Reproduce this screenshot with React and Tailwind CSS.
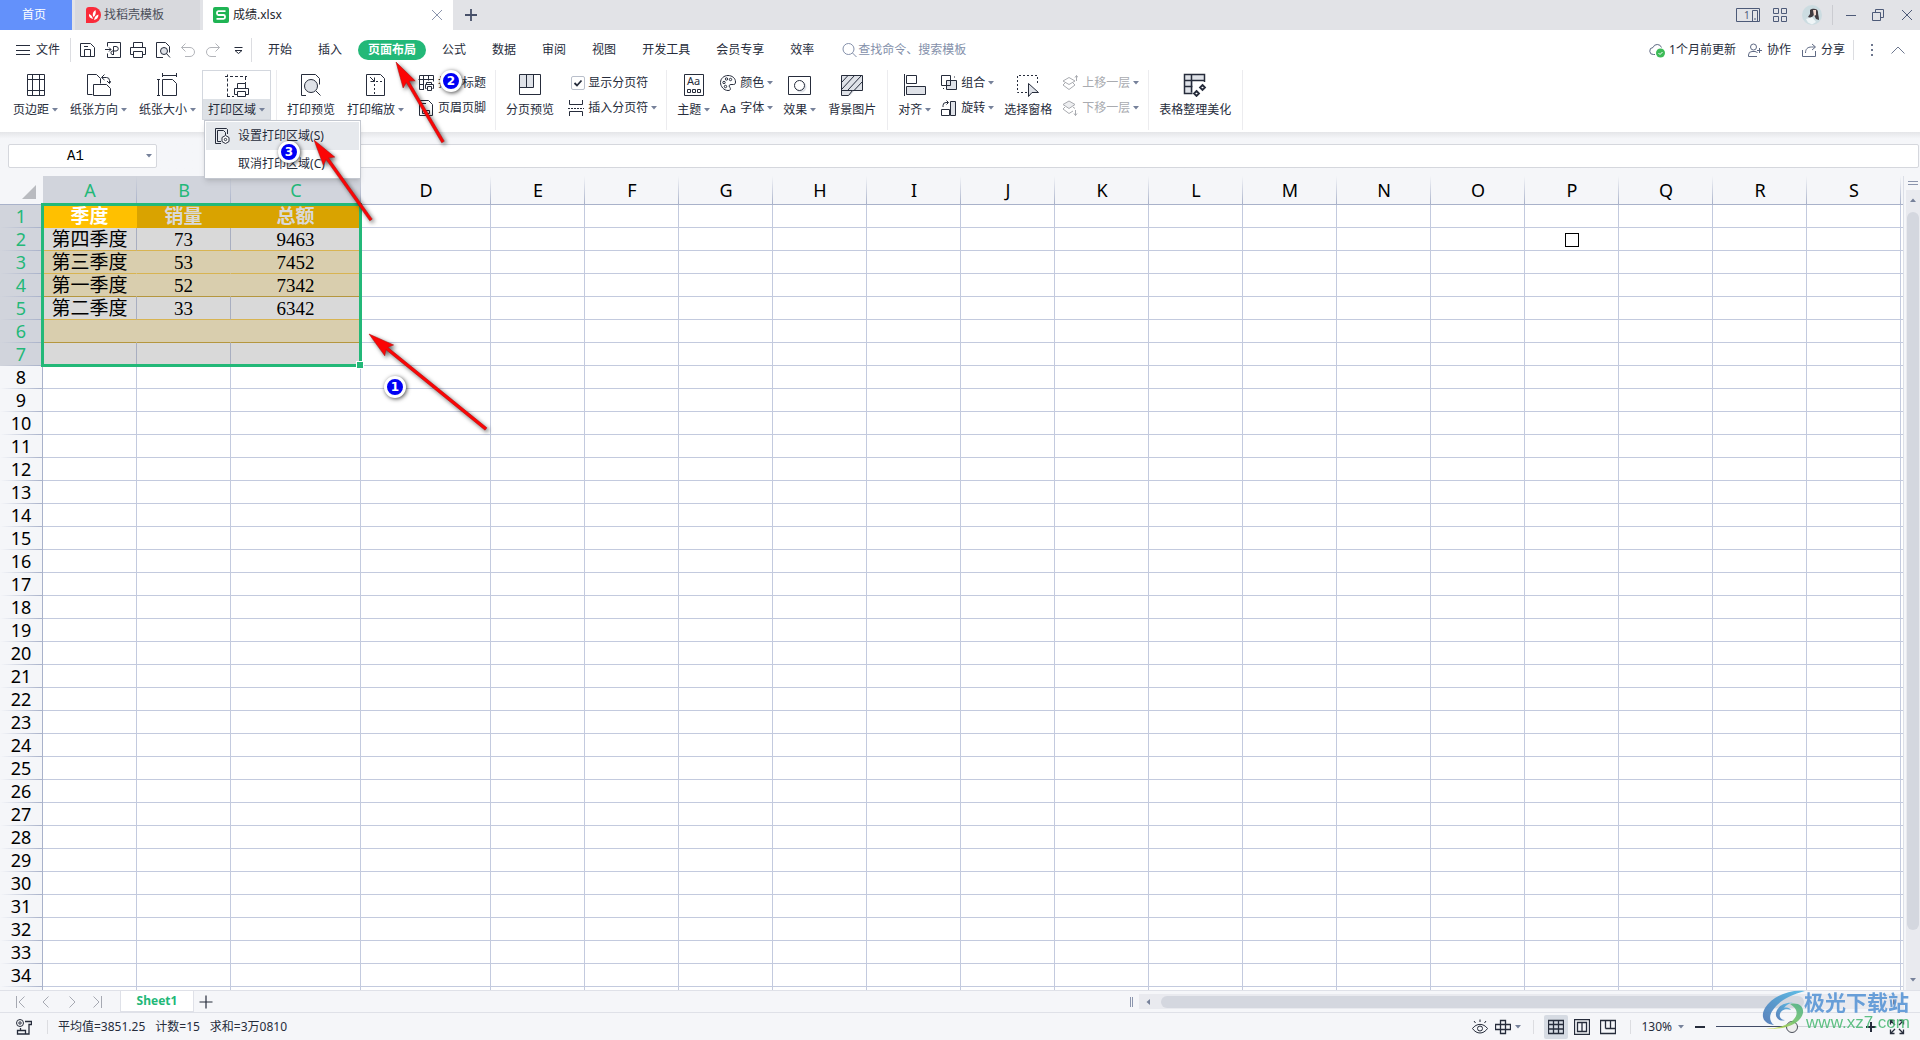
import { useState } from "react";

const COLUMNS = [
  { name: "A", width: 94 },
  { name: "B", width: 94 },
  { name: "C", width: 130 },
  { name: "D", width: 130 },
  ..."EFGHIJKLMNOPQRS".split("").map((name) => ({ name, width: 94 })),
];

const ROW_COUNT = 34;
const SELECTED_ROWS = 7;
const SELECTED_COLS = 3;

const DATA = [
  ["季度", "销量", "总额"],
  ["第四季度", "73", "9463"],
  ["第三季度", "53", "7452"],
  ["第一季度", "52", "7342"],
  ["第二季度", "33", "6342"],
  ["", "", ""],
  ["", "", ""],
];

const MENU_TABS = [
  "开始",
  "插入",
  "页面布局",
  "公式",
  "数据",
  "审阅",
  "视图",
  "开发工具",
  "会员专享",
  "效率",
];

/* Icons */
function Icon({ size = 16, className = "", children }) {
  return (
    <svg
      width={size}
      height={size}
      viewBox={`0 0 ${size} ${size}`}
      fill="none"
      stroke="currentColor"
      className={`shrink-0 ${className}`}
      aria-hidden="true"
    >
      {children}
    </svg>
  );
}

function Caret({ className = "" }) {
  return (
    <svg width="6" height="4" viewBox="0 0 6 4" className={`shrink-0 fill-[#76819a] ${className}`} aria-hidden="true">
      <path d="M0 0h6L3 3.5z" />
    </svg>
  );
}

const SaveIcon = () => (
  <Icon>
    <path d="M.5 1.5h10l4 4v9h-14zM4.5 14.5v-7h6v7M4 4.5h4" />
  </Icon>
);
const ExportIcon = () => (
  <Icon>
    <path d="M2.500 4.500v-4h13v15h-13v-4M0 7.500h6M4 5.500l2 2-2 2M8.500 12.500v-8h2.500a2.200 2.200 0 0 1 0 4.500H7a2 2 0 0 0 0 3.500h2" />
  </Icon>
);
const PrintIcon = () => (
  <Icon>
    <path d="M3.5 5.500v-5h9v5M3.500 12.500h-3v-7h15v7h-3M3.500 9.500h9v6h-9z" />
  </Icon>
);
const PreviewIcon = () => (
  <Icon>
    <path d="M8 15.500H1.500V.500h9l4 4v6" />
    <circle cx="9" cy="9" r="3.500" fill="#dfe2e8" />
    <path d="M11.500 11.500l3.500 4" />
  </Icon>
);
const UndoIcon = () => (
  <Icon>
    <path d="M5.500 1.500l-4 4 4 4M1.500 5.500H10a4.500 4.500 0 0 1 0 9H5" />
  </Icon>
);
const RedoIcon = () => (
  <Icon>
    <path d="M10.500 1.500l4 4-4 4M14.500 5.500H6a4.500 4.500 0 0 0 0 9h5" />
  </Icon>
);

const MarginIcon = () => (
  <Icon size={24}>
    <path fill="#fff" d="M3.500 1.500h17v21h-17z" />
    <path d="M8.500 1.500v21M15.500 1.500v21M3.500 6.500h17M3.500 17.500h17" />
  </Icon>
);
const OrientationIcon = () => (
  <Icon size={24}>
    <path d="M5.500 21.500h-5v-20h9l4 4v5" />
    <path d="M6.500 11.500h13l4 4v7h-17zM15 4.500h4.500a3 3 0 0 1 3 3V10M17.500 1.500l-3 3 3 2.500M20 8l2.500 2.500L24 8" />
  </Icon>
);
const PaperSizeIcon = () => (
  <Icon size={24}>
    <path d="M6.500 6.500h10l4 4v12h-14zM1 6.500h3M1 22.500h3M2.500 6.500v16M6.500 0v4M20.500 0v4M6.500 2.500h14" />
  </Icon>
);
const PrintAreaIcon = () => (
  <Icon size={24}>
    <path strokeDasharray="3 2" d="M2.500 22.500v-22M0 2.500h22M20.500 3v7M2 22.500h7" />
    <path fill="#fff" d="M12.500 14.500v-5h8v5M12.500 20.500h-3v-6h14v6h-3M12.500 17.500h8v5h-8z" />
  </Icon>
);
const BigPreviewIcon = () => (
  <Icon size={24}>
    <path d="M7 22.500H2.500v-21h14l4 4v6" />
    <circle cx="12" cy="13" r="6.500" fill="#dfe2e8" />
    <path d="M17 18l4.500 4.500" />
  </Icon>
);
const ScaleIcon = () => (
  <Icon size={24}>
    <path d="M2.500 1.500h14l4 4v17h-18zM6 4l4.500 4.500M10.500 4.500v4h-4" />
    <path strokeDasharray="2 2" d="M10.500 11v11M12 8.500h8" />
  </Icon>
);
const PageBreakIcon = () => (
  <Icon size={24}>
    <path fill="#dfe2e8" stroke="none" d="M1 2h14v13H1z" />
    <path d="M1.500 1.500h21v20h-21zM8.500 1.500v13M15.500 1.500v13M1.500 14.500h14" />
  </Icon>
);
const ThemeIcon = () => (
  <Icon size={24}>
    <path d="M2.500 1.500h19v21h-19z" />
    <path d="M5.500 16.500h3v3h-3zM10.500 16.500h3v3h-3zM15.500 16.500h3v3h-3z" />
    <text x="5" y="12" fontSize="11" stroke="none" fill="currentColor" fontFamily="Noto Sans">
      Aa
    </text>
  </Icon>
);
const EffectIcon = () => (
  <Icon size={24}>
    <path d="M.5 3.500h22v18H.500z" />
    <circle cx="13" cy="14" r="5.500" fill="#dfe2e8" stroke="none" />
    <circle cx="11.500" cy="12.500" r="5" fill="#fff" />
  </Icon>
);
const BackgroundIcon = () => (
  <Icon size={24}>
    <path fill="#dfe2e8" d="M1.500 2.500h21v15h-8l-4 5h-9z" stroke="none" />
    <path d="M12.500 17.500h10v-15h-21v20h7l4-5h-11M2 9l6-6.500M2 16l12.500-13.500M8 17L21 3M14.500 17l8-8.500" />
  </Icon>
);
const AlignIcon = () => (
  <Icon size={24}>
    <path d="M1.500 1v22M3.500 2.500h10v8h-10z" />
    <path fill="#dfe2e8" d="M3.500 13.500h19v8h-19z" />
  </Icon>
);
const SelectPaneIcon = () => (
  <Icon size={24}>
    <path strokeDasharray="2 2" d="M11 19.500H1.500v-17h20v9" />
    <path fill="#dfe2e8" d="M12.500 10.500v13l3.500-4h6.500z" />
  </Icon>
);
const BeautifyIcon = () => (
  <Icon size={24}>
    <path fill="#dfe2e8" stroke="none" d="M1 1h21v7H10v12H1z" />
    <path strokeWidth="1.500" d="M9.500 20.500h-8v-19h20v6h-20M1.500 13.500h8M8.500 1.500v18M21.500 7v2" />
    <path strokeWidth="1.800" fill="#fff" d="M19.500 12l2.500 2.500-2.500 2.500-2.500-2.500zM13.500 18l2.500 2.500-2.500 2.500-2.500-2.500z" />
  </Icon>
);

const PrintTitleIcon = () => (
  <Icon>
    <path d="M6 14.500H1.500v-14h14v6M.500 4.500h15M5.500.500v14M10.500.500v5M1 9.500h5" />
    <path fill="#fff" d="M8.500 9.500v-2h5v2M8.500 13.500h-1v-4h8v4h-1M9.500 11.500h4v4h-4z" />
  </Icon>
);
const HeaderFooterIcon = () => (
  <Icon>
    <path d="M1.500.500h9l4 4v11h-13zM4 3.500h4M4.500 10.500h7v3h-7z" />
  </Icon>
);
const InsertBreakIcon = () => (
  <Icon>
    <path d="M1.500 0v4.500h13V0M1.500 16v-4.500h13V16" />
    <path strokeDasharray="2 1" d="M0 8.500h16" />
  </Icon>
);
const PaletteIcon = () => (
  <Icon>
    <path d="M8 .5C4 .5.5 3.500.5 7.500S4 15.500 8 15.500c3.500 0 2.500-2.500 1.500-3.500-1-1.300 0-2.500 1.500-2.500h2.500c1.500 0 2-1 2-2.500C15.500 3 12 .5 8 .5z" />
    <circle cx="4" cy="7.500" r="1.200" />
    <circle cx="6.500" cy="4" r="1.200" />
    <circle cx="10.500" cy="4.500" r="1.200" />
    <circle cx="5.500" cy="11.500" r="1.200" />
  </Icon>
);
const CombineIcon = () => (
  <Icon>
    <path d="M.5.500h9v10h-9z" />
    <path fill="#dfe2e8" d="M5.500 5.500h10v9h-10z" />
    <path d="M9.500 5v5.500H5M13 2h1M2 13.500h1" />
  </Icon>
);
const RotateIcon = () => (
  <Icon>
    <path d="M.5 15.500h8v-6h-8zM2 7V5.500a3 3 0 0 1 3-3h2M5.500.500l2 2-2 2" />
    <path fill="#dfe2e8" d="M9.500 1.500h5v14h-5z" />
  </Icon>
);
const LayerUpIcon = () => (
  <Icon>
    <path d="M7 2.500l6 3.500-6 3.500L1 6zM3 8L1 10l6 4.500 6-4.500-2-2M14.500 6V.500M13 2.500l1.500-2 1.500 2" />
  </Icon>
);
const LayerDownIcon = () => (
  <Icon>
    <path fill="#eeeff1" d="M7 1l6 3.500L7 8.500 1 4.500z" />
    <path d="M3 7L1 9l6 4.500 4-2.500M11 7l2 1.500M13.500 10v5.500M12 13.500l1.500 2 1.500-2" />
  </Icon>
);
const SetAreaIcon = () => (
  <Icon>
    <path d="M7 13.500H3.500v-11h6l2 2V7M7 15.500H1.500v-15h11l1 1V6" />
    <path fill="#fff" d="M11.500 7.500l3.500 2v4l-3.500 2-3.500-2v-4z" />
    <circle cx="11.500" cy="11.500" r="1.200" />
  </Icon>
);

/* Ribbon parts */
function BigButton({ icon, label, menu, active }) {
  return (
    <button
      className={`flex shrink-0 flex-col items-center whitespace-nowrap ${
        active ? "bg-[#dde1e6] outline outline-[#d3d7de] -outline-offset-1" : ""
      }`}
    >
      <span
        className={`flex h-[29px] w-full items-center justify-center pt-px ${active ? "border border-b-0 border-[#d3d7de] bg-white" : ""}`}
      >
        {icon}
      </span>
      <span className="flex h-[21px] items-center gap-[3px] px-1.5">
        {label}
        {menu && <Caret />}
      </span>
    </button>
  );
}

function SmallButton({ icon, label, menu, disabled }) {
  return (
    <button
      disabled={disabled}
      className={`flex h-[25px] items-center whitespace-nowrap px-1 ${disabled ? "text-[#a9abb0]" : ""}`}
    >
      {icon}
      <span className="ml-1">{label}</span>
      {menu && <Caret className="ml-[3px]" />}
    </button>
  );
}

const Divider = () => <div className="mr-1 ml-[5px] h-[60px] w-px shrink-0 bg-[#ececef]" />;

function TitleBar() {
  return (
    <div className="flex h-[30px] shrink-0 items-stretch bg-[#e2e3e7]">
      <button className="w-[72px] bg-[#6391fb] pr-1 text-white">首页</button>
      <button className="ml-[3px] flex w-[125px] items-center gap-0.5 bg-[#d8d9dd] pl-[11px] text-[#4b4f5a]">
        <Icon>
          <path fill="#fa2b3a" stroke="none" d="M3 0h4a8 8 0 0 1 0 16H0V3a3 3 0 0 1 3-3z" />
          <path
            fill="#fff"
            stroke="none"
            d="M7 12C4 11.500 2.500 9.500 3 7c2 .5 3.500 2.500 4 5zM7.500 10C6 7.500 7 4.500 9.500 3c.8 3 0 5.500-2 7zM8 13c.5-3 2-5 4.500-5.500 0 3-1.500 5-4.500 5.500z"
          />
        </Icon>
        找稻壳模板
      </button>
      <div className="ml-[3px] flex w-[250px] items-center bg-white pl-2.5 text-[#23252c]">
        <Icon>
          <rect width="16" height="16" rx="2" fill="#1fb454" stroke="none" />
          <path stroke="#fff" strokeWidth="1.800" d="M12.500 4.200H5.500a1.500 1.500 0 0 0-1.500 1.500v.8A1.500 1.500 0 0 0 5.500 8h5A1.500 1.500 0 0 1 12 9.500v.800a1.500 1.500 0 0 1-1.500 1.500h-7" />
        </Icon>
        <span className="ml-1">成绩.xlsx</span>
        <button aria-label="关闭标签" className="mr-1.5 ml-auto p-1 text-[#8b95ad]">
          <Icon size={12}>
            <path d="M1 1l10 10M11 1L1 11" />
          </Icon>
        </button>
      </div>
      <button aria-label="新建标签" className="ml-1.5 w-6 text-[#475069]">
        <Icon size={14} className="mx-auto">
          <path strokeWidth="1.800" d="M7 1v12M1 7h12" />
        </Icon>
      </button>
      <div className="ml-auto flex items-center text-[#4d5a78]">
        <svg width="25" height="15" fill="none" stroke="currentColor" aria-hidden="true">
          <path d="M.5.500h23v13H.500zM16.500 2.500h5v11h-5zM18 11h2" />
          <text x="8" y="11" fontSize="10" stroke="none" fill="#4d5a78">
            1
          </text>
        </svg>
        <Icon size={15} className="ml-3">
          <path d="M.5.500h5v5h-5zM8.500.500h5v5h-5zM.500 8.500h5v5h-5zM8.500 8.500h5v5h-5z" />
        </Icon>
        <svg width="20" height="20" viewBox="0 0 20 20" className="ml-3.5" aria-hidden="true">
          <circle cx="10" cy="10" r="10" fill="#ccdce1" />
          <path fill="#413b40" d="M8 5c2-2 8-2 8 2 0 3 1 4 1 8l-3-1-2-4-3 3-3-1 2-3z" />
          <path fill="#f3d9cf" d="M11 5h3v5l-2 1z" />
          <path fill="#eff5f7" d="M4 14l6-2 4 5-4 2.500-4-2z" />
        </svg>
        <div className="ml-2.5 h-5 w-px bg-[#cbccd1]" />
        <button aria-label="最小化" className="ml-3">
          <Icon size={12}>
            <path d="M1 6.500h10" />
          </Icon>
        </button>
        <button aria-label="还原" className="ml-3.5">
          <Icon size={14}>
            <path d="M1.500 4.500h8v8h-8zM4.500 4V1.500h8v8H10" />
          </Icon>
        </button>
        <button aria-label="关闭" className="mr-[7px] ml-4">
          <Icon size={12}>
            <path d="M1 1l10 10M11 1L1 11" />
          </Icon>
        </button>
      </div>
    </div>
  );
}

function MenuBar({ tab, setTab }) {
  return (
    <div className="flex h-[38px] shrink-0 items-center bg-white pt-px whitespace-nowrap">
      <button className="ml-[15px] flex items-center gap-[5px]">
        <Icon>
          <path d="M1 3.500h14M1 8.500h14M1 12.500h14" />
        </Icon>
        文件
      </button>
      <div className="ml-2.5 h-6 w-px bg-[#dcdde1]" />
      <div className="ml-[9px] flex items-center gap-[9px]">
        <button aria-label="保存"><SaveIcon /></button>
        <button aria-label="输出为PDF"><ExportIcon /></button>
        <button aria-label="打印"><PrintIcon /></button>
        <button aria-label="打印预览"><PreviewIcon /></button>
        <button aria-label="撤销" className="text-[#b3b5ba]"><UndoIcon /></button>
        <button aria-label="恢复" className="text-[#b3b5ba]"><RedoIcon /></button>
        <button aria-label="更多">
          <Icon>
            <path d="M4.500 5.500h8M5 8.500h7l-3.500 3z" />
          </Icon>
        </button>
      </div>
      <div className="ml-[5px] h-6 w-px bg-[#dcdde1]" />
      <nav className="ml-1.5 flex items-center gap-1.5">
        {MENU_TABS.map((name) => (
          <button
            key={name}
            onClick={() => setTab(name)}
            className={`h-5 rounded-full px-2.5 ${name === tab ? "bg-[#23b878] font-bold text-white" : ""}`}
          >
            {name}
          </button>
        ))}
      </nav>
      <label className="ml-[18px] flex items-center text-[#8490aa]">
        <Icon>
          <circle cx="6.500" cy="7" r="5.500" />
          <path d="M10.500 11l4 4" />
        </Icon>
        <input
          aria-label="搜索"
          placeholder="查找命令、搜索模板"
          className="w-[130px] placeholder:text-[#8490aa] focus:outline-none"
        />
      </label>
      <div className="mr-3.5 ml-auto flex items-center">
        <button className="flex items-center gap-1">
          <Icon className="text-[#5f6a84]">
            <path d="M6 12.500H4.500a3.500 3.500 0 0 1-.5-7 4.500 4.500 0 0 1 8.500 0" />
            <circle cx="11.500" cy="11" r="4.500" fill="#3dbb57" stroke="none" />
            <path stroke="#fff" d="M9.500 11l1.500 1.500 2.500-2.500" />
          </Icon>
          1个月前更新
        </button>
        <button className="ml-[11px] flex items-center gap-1">
          <Icon className="text-[#5f6a84]">
            <circle cx="6.500" cy="5" r="3" />
            <path d="M10 14.500H1.500V13a3.500 3.500 0 0 1 3.500-3.500h3a3 3 0 0 1 2.500 1.500M10 8.500h5M12.500 6v5" />
          </Icon>
          协作
        </button>
        <button className="ml-2.5 flex items-center gap-1">
          <Icon className="text-[#5f6a84]">
            <path d="M1.500 8v6.500h13V9M4.500 11c0-4 2-6 6-6h3.500M11 2l3.500 3L11 8" />
          </Icon>
          分享
        </button>
        <div className="ml-2 h-5 w-px bg-[#dcdde1]" />
        <button aria-label="更多选项" className="ml-[9px] text-[#6d778e]">
          <Icon>
            <path strokeWidth="2" strokeDasharray="2 3" d="M9 2v12" />
          </Icon>
        </button>
        <button aria-label="收起功能区" className="ml-[11px] text-[#6d778e]">
          <Icon>
            <path d="M1.500 11.500L8 5l6.500 6.500" />
          </Icon>
        </button>
      </div>
    </div>
  );
}

function PrintAreaMenu() {
  return (
    <div className="absolute top-[50px] left-0.5 z-20 w-[157px] border border-[#c3c7cf] bg-white p-px shadow-md">
      <button className="flex h-[28px] w-full items-center gap-2 bg-[#e6e9ed] pl-[8px]">
        <SetAreaIcon />
        设置打印区域(S)
      </button>
      <button className="flex h-[27px] w-full items-center pl-8">取消打印区域(C)</button>
    </div>
  );
}

function Ribbon() {
  const [showBreaks, setShowBreaks] = useState(true);
  return (
    <div className="flex h-16 shrink-0 bg-white pt-0.5 pl-[7px]">
      <div className="relative z-20 flex items-start">
        <BigButton icon={<MarginIcon />} label="页边距" menu />
        <BigButton icon={<OrientationIcon />} label="纸张方向" menu />
        <BigButton icon={<PaperSizeIcon />} label="纸张大小" menu />
        <div className="relative">
          <BigButton icon={<PrintAreaIcon />} label="打印区域" menu active />
          <PrintAreaMenu />
        </div>
      </div>
      <Divider />
      <div className="flex items-start">
        <BigButton icon={<BigPreviewIcon />} label="打印预览" />
        <BigButton icon={<ScaleIcon />} label="打印缩放" menu />
        <div className="ml-1">
          <SmallButton icon={<PrintTitleIcon />} label="打印标题" />
          <SmallButton icon={<HeaderFooterIcon />} label="页眉页脚" />
        </div>
      </div>
      <Divider />
      <div className="flex items-start">
        <BigButton icon={<PageBreakIcon />} label="分页预览" />
        <div className="ml-1">
          <label className="flex h-[25px] items-center pl-[7px]">
            <span className="relative flex h-3.5 w-3.5 items-center justify-center">
              <input
                type="checkbox"
                checked={showBreaks}
                onChange={(e) => setShowBreaks(e.target.checked)}
                className="absolute inset-0 appearance-none rounded-xs border border-[#b9bfcb] bg-white"
              />
              {showBreaks && (
                <Icon size={10} className="pointer-events-none relative">
                  <path strokeWidth="1.800" d="M1.500 5L4 7.500l4.500-5" />
                </Icon>
              )}
            </span>
            <span className="ml-[3px]">显示分页符</span>
          </label>
          <SmallButton icon={<InsertBreakIcon />} label="插入分页符" menu />
        </div>
      </div>
      <Divider />
      <div className="flex items-start">
        <BigButton icon={<ThemeIcon />} label="主题" menu />
        <div>
          <SmallButton icon={<PaletteIcon />} label="颜色" menu />
          <SmallButton icon={<span className="w-4 text-[13px]">Aa</span>} label="字体" menu />
        </div>
        <BigButton icon={<EffectIcon />} label="效果" menu />
        <BigButton icon={<BackgroundIcon />} label="背景图片" />
      </div>
      <Divider />
      <div className="flex items-start">
        <BigButton icon={<AlignIcon />} label="对齐" menu />
        <div>
          <SmallButton icon={<CombineIcon />} label="组合" menu />
          <SmallButton icon={<RotateIcon />} label="旋转" menu />
        </div>
        <BigButton icon={<SelectPaneIcon />} label="选择窗格" />
        <div>
          <SmallButton icon={<LayerUpIcon />} label="上移一层" menu disabled />
          <SmallButton icon={<LayerDownIcon />} label="下移一层" menu disabled />
        </div>
      </div>
      <Divider />
      <BigButton icon={<BeautifyIcon />} label="表格整理美化" />
      <Divider />
    </div>
  );
}

function FormulaBar() {
  return (
    <div className="flex h-11 shrink-0 items-center bg-linear-to-b from-[#e4e5e8] via-[#f5f6f9] via-15% to-[#f5f6f9] pt-1 pl-2">
      <div className="flex h-6 w-[149px] items-center rounded-xs border border-[#d5d7dd] bg-white pr-1">
        <input
          aria-label="名称框"
          defaultValue="A1"
          className="min-w-0 flex-1 pr-1 text-center font-['Liberation_Mono',monospace] text-[14px] text-black focus:outline-none"
        />
        <Caret />
      </div>
      <Icon className="ml-[46px] text-[#5f6a84]">
        <circle cx="6.500" cy="7" r="5" />
        <path d="M10.500 11l4 4" />
      </Icon>
      <input
        aria-label="编辑栏"
        className="mr-px ml-[31px] h-6 min-w-0 flex-1 rounded-xs border border-[#d5d7dd] bg-white px-2 focus:outline-none"
      />
    </div>
  );
}

function cellClass(row, col) {
  if (row >= SELECTED_ROWS || col >= SELECTED_COLS) return "border-[#c3cade]";
  if (row === 0) {
    return col === 0
      ? "border-[#ffc000] bg-[#ffc000] font-bold text-white"
      : "border-[#d9a300] bg-[#d9a300] font-bold text-[#d9d9d9]";
  }
  if (row === 1 || row === 4) return "border-r-[#a8aec0] border-b-[#d8b452] bg-[#d9d9d9] text-black";
  if (row === 6) return "border-[#a8aec0] bg-[#d9d9d9]";
  if (row === 2) return "border-r-[#d9ceae] border-b-[#d8b452] bg-[#d9ceae] text-black";
  return "border-r-[#d9ceae] border-b-[#b5973f] bg-[#d9ceae] text-black";
}

function ColumnEdge() {
  return <span className="absolute top-0 right-0 h-full w-px bg-linear-to-b from-transparent to-[#a9b2ca]" />;
}

function Sheet() {
  const rows = Array.from({ length: ROW_COUNT + 1 });
  return (
    <div className="flex min-h-0 flex-1 bg-[#f5f6f9]">
      <div className="relative min-w-0 flex-1 overflow-hidden border-r border-[#dcdfe7]">
        <table className="w-full table-fixed border-separate border-spacing-0 bg-white">
          <colgroup>
            <col className="w-[43px]" />
            {COLUMNS.map((c) => (
              <col key={c.name} style={{ width: c.width }} />
            ))}
            <col />
          </colgroup>
          <thead>
            <tr className="h-[29px]">
              <th className="border-b border-[#a9b2ca] bg-[#f5f6f9] p-0">
                <svg width="14" height="14" className="mt-1 ml-[22px]" aria-hidden="true">
                  <path d="M14 0v14H0z" fill="#b9bbc0" />
                </svg>
              </th>
              {COLUMNS.map((c, i) => (
                <th
                  key={c.name}
                  className={`relative border-b border-[#a9b2ca] p-0 text-[18px] leading-7 font-normal ${
                    i < SELECTED_COLS ? "bg-[#d1d4dc] text-[#23b878]" : "bg-[#f5f6f9] text-black"
                  }`}
                >
                  {c.name}
                  <ColumnEdge />
                </th>
              ))}
              <th className="border-b border-[#a9b2ca] bg-[#f5f6f9] p-0" />
            </tr>
          </thead>
          <tbody>
            {rows.map((_, r) => (
              <tr key={r} className="h-[23px]">
                <th
                  className={`relative border-r border-[#a9b2ca] p-0 pb-0.5 text-[18px] leading-[20px] font-normal ${
                    r < SELECTED_ROWS ? "bg-[#d1d4dc] text-[#23b878]" : "bg-[#f5f6f9] text-black"
                  }`}
                >
                  {r < ROW_COUNT ? r + 1 : ""}
                  <span className="absolute bottom-0 left-0 h-px w-full bg-linear-to-r from-transparent to-[#a9b2ca]" />
                </th>
                {COLUMNS.map((c, i) => (
                  <td
                    key={c.name}
                    className={`border-r border-b p-0 pt-0.5 text-center font-['Liberation_Serif','Noto_Sans_CJK_SC',serif] text-[19px] leading-[20px] whitespace-nowrap ${cellClass(r, i)}`}
                  >
                    {DATA[r]?.[i]}
                    {c.name === "P" && r === 1 && <span className="mx-auto block h-3.5 w-3.5 border border-black" />}
                  </td>
                ))}
                <td className="border-b border-[#c3cade] p-0" />
              </tr>
            ))}
          </tbody>
        </table>
        {/* selection frame with its fill handle */}
        <div className="pointer-events-none absolute top-[27px] left-[41px] h-[164px] w-[321px] border-3 border-[#23b878]">
          <span className="absolute -right-1 -bottom-1 h-1.5 w-1.5 bg-[#23b878] outline outline-white" />
        </div>
      </div>
      <div className="flex w-4 shrink-0 flex-col items-center pl-0.5">
        <div className="mt-[5px] h-1 w-2.5 shrink-0 border-y border-[#8b95ad]" />
        <div className="mt-[5px] flex w-full flex-1 flex-col items-center bg-[#e9eaef] pt-2">
          <Caret className="rotate-180" />
          <div className="mt-2.5 h-[718px] w-3 rounded-full bg-[#d4d7df]" />
          <Caret className="mt-auto mb-2" />
        </div>
      </div>
    </div>
  );
}

function SheetTabs() {
  return (
    <div className="flex h-[23px] shrink-0 border-y border-[#dfe1e8] bg-[#f5f6f9]">
      <div className="flex w-[59%] items-center">
        <div className="ml-3 flex gap-2.5 text-[#a6a9b2]">
          <button aria-label="第一个工作表">
            <Icon>
              <path d="M4.500 2v12M12.500 2.500L7 8l5.500 5.500" />
            </Icon>
          </button>
          <button aria-label="上一个工作表">
            <Icon>
              <path d="M10.500 2.500L5 8l5.500 5.500" />
            </Icon>
          </button>
          <button aria-label="下一个工作表">
            <Icon>
              <path d="M5.500 2.500L11 8l-5.500 5.500" />
            </Icon>
          </button>
          <button aria-label="最后一个工作表">
            <Icon>
              <path d="M3.500 2.500L9 8l-5.500 5.500M11.500 2v12" />
            </Icon>
          </button>
        </div>
        <button className="ml-3.5 h-full w-[74px] border-x border-b border-[#dfe1e8] bg-white text-[12px] font-bold text-[#23b878]">
          Sheet1
        </button>
        <button aria-label="新建工作表" className="ml-1">
          <Icon>
            <path strokeWidth="1.200" d="M8 1.500v13M1.500 8h13" />
          </Icon>
        </button>
        <div className="ml-auto h-2.5 w-[3px] border-x border-[#8b95ad]" />
      </div>
      <div className="my-[3px] mr-4 ml-1.5 flex flex-1 items-center bg-[#e9eaef] px-1.5">
        <Caret className="rotate-90" />
        <div className="ml-2.5 h-3 w-[643px] rounded-full bg-[#d4d7df]" />
        <Caret className="ml-auto -rotate-90" />
      </div>
    </div>
  );
}

function StatusBar() {
  const [zoom, setZoom] = useState(52);
  return (
    <div className="flex h-[27px] shrink-0 items-center bg-[#f5f6f9] whitespace-nowrap">
      <div className="ml-4">
        <Icon>
          <circle cx="4" cy="4" r="3.500" />
          <circle cx="4" cy="4" r="1.200" />
          <path strokeWidth="1.300" d="M9 2.500h6.500v3h-2.500v9.500H1.500v-3.500h8V15M4.500 9v2.500" />
        </Icon>
      </div>
      <div className="ml-[15px] h-3.5 w-px bg-[#dcdde1]" />
      <div className="ml-2.5 flex gap-2.5">
        <span>平均值=3851.25</span>
        <span>计数=15</span>
        <span>求和=3万0810</span>
      </div>
      <div className="mr-[15px] ml-auto flex items-center">
        <button aria-label="护眼模式">
          <Icon>
            <path d="M.5 9.500c4-5.500 11-5.500 15 0-4 6-11 6-15 0zM8 3V.500M3.500 4L2 2M12.500 4L14 2" />
            <circle cx="8" cy="9.500" r="2.500" />
          </Icon>
        </button>
        <button aria-label="阅读模式" className="ml-[7px] flex items-center gap-1">
          <Icon>
            <path strokeWidth="1.300" d="M5.500 1.500h5v13h-5zM.500 5.500h15v5H.500z" />
          </Icon>
          <Caret />
        </button>
        <div className="ml-3 h-3.5 w-px bg-[#dcdde1]" />
        <button aria-label="普通视图" className="ml-2.5 flex h-6 w-6 items-center justify-center rounded-xs bg-[#d6dbe3]">
          <Icon>
            <path strokeWidth="1.300" d="M.5 1.500h15v13H.500zM.500 5.500h15M.500 10h15M5.500 1.500v13M10.500 1.500v13" />
          </Icon>
        </button>
        <button aria-label="分页视图" className="ml-1.5">
          <Icon>
            <path strokeWidth="1.300" d="M.5.500h15v15H.500zM3.500 3.500h4.500v9H3.500zM8 3.500h4.500v9H8z" />
          </Icon>
        </button>
        <button aria-label="页面视图" className="ml-2.5">
          <Icon>
            <path strokeWidth="1.300" d="M.5 1.500h15v13H.500zM5.500 1.500v8M10.500 1.500v8M5.500 9.500h10" />
          </Icon>
        </button>
        <div className="ml-3.5 h-3.5 w-px bg-[#dcdde1]" />
        <button className="ml-2.5 flex items-center gap-1.5">
          130%
          <Caret />
        </button>
        <button aria-label="缩小" className="ml-2.5">
          <Icon size={12}>
            <path strokeWidth="2" d="M1 6h10" />
          </Icon>
        </button>
        <input
          type="range"
          aria-label="缩放比例"
          value={zoom}
          onChange={(e) => setZoom(Number(e.target.value))}
          className="ml-2.5 h-px w-[146px] appearance-none bg-linear-to-r from-[#414b66] from-50% to-[#d0d3da] to-50% [&::-webkit-slider-thumb]:h-3 [&::-webkit-slider-thumb]:w-3 [&::-webkit-slider-thumb]:appearance-none [&::-webkit-slider-thumb]:rounded-full [&::-webkit-slider-thumb]:border [&::-webkit-slider-thumb]:border-[#4b4f5a] [&::-webkit-slider-thumb]:bg-[#eeeeee]"
        />
        <button aria-label="放大" className="ml-[3px]">
          <Icon size={12}>
            <path strokeWidth="2" d="M6 1v10M1 6h10" />
          </Icon>
        </button>
        <button aria-label="全屏" className="ml-3">
          <Icon>
            <path strokeWidth="1.300" d="M1.500 5.500v-4h4M10.500 1.500h4v4M14.500 10.500v4h-4M5.500 14.500h-4v-4M1.500 1.500l4.500 4.500M14.500 1.500L10 6M14.500 14.500L10 10M1.500 14.500L6 10" />
          </Icon>
        </button>
      </div>
    </div>
  );
}

function Watermark() {
  return (
    <div className="pointer-events-none absolute right-2.5 bottom-2 z-30 flex opacity-90">
      <svg width="44" height="42" viewBox="0 0 44 42" aria-hidden="true">
        <defs>
          <linearGradient id="swooshBlue" x1="0" y1="1" x2="1" y2="0">
            <stop offset="0" stopColor="#4b74b4" />
            <stop offset="1" stopColor="#4fb9e6" />
          </linearGradient>
          <linearGradient id="swooshGreen" x1="0" y1="1" x2="1" y2="0">
            <stop offset="0" stopColor="#e3e04a" />
            <stop offset="0.500" stopColor="#76c568" />
            <stop offset="1" stopColor="#4cb08a" />
          </linearGradient>
        </defs>
        <path
          fill="url(#swooshBlue)"
          d="M43 1C28-1 10 6 3 18c-5 9-1 16 9 17-5-4-5-10-1-15C17 11 28 5 43 1z"
        />
        <path
          fill="url(#swooshBlue)"
          d="M31 13c-9-1-16 4-17 10-1 5 4 9 9 7-4 0-6-3-5-6 1-4 6-6 11-4-1-2-4-3-7-2 2-3 5-5 9-5z"
        />
        <path fill="url(#swooshGreen)" d="M28 14c9-2 14 3 13 9-2 10-17 17-37 16 16-1 27-6 30-13 2-5-1-9-6-12z" />
      </svg>
      <div className="-ml-0.5">
        <div className="text-[21px] leading-[24px] font-bold text-[#5a96d6]">极光下载站</div>
        <div className="ml-0.5 font-['Liberation_Sans',sans-serif] text-[17px] leading-[18px] text-[#4fbb78]">
          www.xz7.com
        </div>
      </div>
    </div>
  );
}

function StepBadge({ number, className }) {
  return (
    <span
      className={`absolute flex h-[22px] w-[22px] items-center justify-center rounded-full border-3 border-white bg-[#0000f5] font-['DejaVu_Sans',sans-serif] text-[12px] leading-none font-bold text-white shadow-[1px_1px_4px_rgba(0,0,0,0.7)] ${className}`}
    >
      {number}
    </span>
  );
}

// x, y: the tip; tx, ty: end of the shaft
function Arrow({ x, y, tx, ty }) {
  const length = Math.hypot(tx - x, ty - y);
  const angle = (Math.atan2(ty - y, tx - x) * 180) / Math.PI;
  return (
    <g transform={`translate(${x} ${y}) rotate(${angle})`}>
      <path d={`M0 0L26 -7L23 -1.500H${length}V1.500H23L26 7z`} fill="#fb0505" stroke="#b01010" strokeWidth="0.500" />
    </g>
  );
}

function Annotations() {
  return (
    <div className="pointer-events-none absolute top-0 left-0 z-30">
      <StepBadge number={1} className="top-[376px] left-[384px]" />
      <StepBadge number={2} className="top-[70px] left-[440px]" />
      <StepBadge number={3} className="top-[141px] left-[278px]" />
      <svg width="520" height="450" className="drop-shadow-[2px_2px_2px_rgba(0,0,0,0.6)]" aria-hidden="true">
        <Arrow x={369} y={334} tx={486} ty={429} />
        <Arrow x={396} y={62} tx={443} ty={142} />
        <Arrow x={314} y={140} tx={371} ty={220} />
      </svg>
    </div>
  );
}

export default function App() {
  const [tab, setTab] = useState("页面布局");
  return (
    <div className="relative flex h-screen flex-col overflow-hidden bg-white font-['Noto_Sans','Noto_Sans_CJK_SC',sans-serif] text-[12px] leading-4 text-[#262c3b]">
      <TitleBar />
      <MenuBar tab={tab} setTab={setTab} />
      <Ribbon />
      <FormulaBar />
      <Sheet />
      <SheetTabs />
      <StatusBar />
      <Annotations />
      <Watermark />
    </div>
  );
}
